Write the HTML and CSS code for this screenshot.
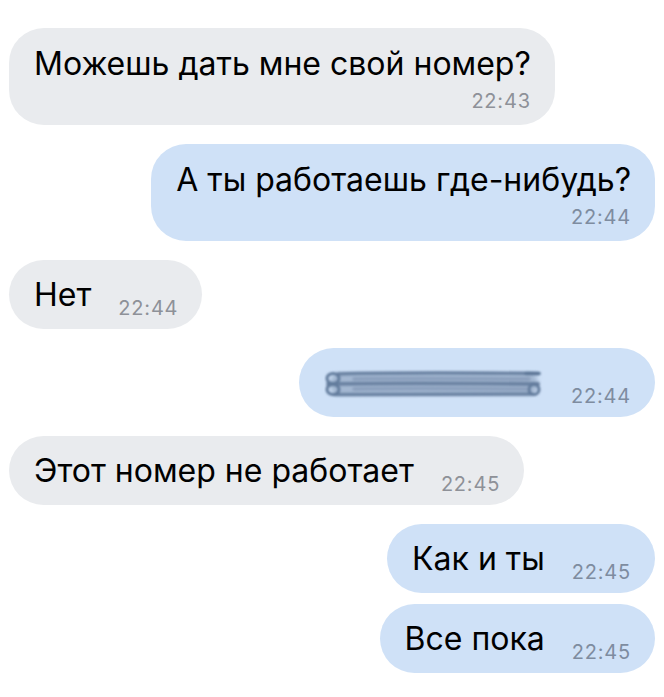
FILE: index.html
```html
<!DOCTYPE html>
<html lang="ru">
<head>
<meta charset="utf-8">
<link rel="stylesheet" href="styles.css">
</head>
<body>
<div class="chat">
  <div class="row in">
    <div class="bubble gray multi">
      <div class="text">Можешь дать мне свой номер?</div>
      <div class="time">22:43</div>
    </div>
  </div>
  <div class="row out">
    <div class="bubble blue multi">
      <div class="text">А ты работаешь где-нибудь?</div>
      <div class="time">22:44</div>
    </div>
  </div>
  <div class="row in">
    <div class="bubble gray single">
      <div class="text">Нет</div>
      <div class="time">22:44</div>
    </div>
  </div>
  <div class="row out">
    <div class="bubble blue single">
      <div class="text scribble-wrap">
        <svg class="scribble" width="220" height="30" viewBox="0 0 220 30">
          <defs>
            <filter id="blur" x="-10%" y="-50%" width="120%" height="200%">
              <feGaussianBlur stdDeviation="1.3"/>
            </filter>
            <filter id="blur2" x="-10%" y="-50%" width="120%" height="200%">
              <feGaussianBlur stdDeviation="2"/>
            </filter>
          </defs>
          <rect x="6" y="4" width="208" height="22" rx="9" fill="#a3b7d1" filter="url(#blur2)"/>
          <g filter="url(#blur)" fill="none" stroke-linecap="round">
            <path d="M14 5 C70 3.5 150 4 214 4.5" stroke="#6a82a2" stroke-width="3.4"/>
            <path d="M4 15 C70 14 150 14.5 214 15" stroke="#6a82a2" stroke-width="3.8"/>
            <path d="M10 25.5 C70 25 150 25.5 208 25" stroke="#6a82a2" stroke-width="3.6"/>
            <path d="M30 10 C100 9 160 10 205 10" stroke="#8a9fbc" stroke-width="3.5"/>
            <path d="M30 20 C100 19 160 20 205 20" stroke="#8a9fbc" stroke-width="3.5"/>
            <ellipse cx="9" cy="9.5" rx="6" ry="5" stroke="#627b9c" stroke-width="3"/>
            <ellipse cx="9" cy="20.5" rx="6" ry="5" stroke="#627b9c" stroke-width="3"/>
            <ellipse cx="210" cy="20.5" rx="5" ry="5" stroke="#627b9c" stroke-width="3"/>
            <path d="M202 4.5 L215 4.5" stroke="#5a7394" stroke-width="3.6"/>
          </g>
        </svg>
      </div>
      <div class="time">22:44</div>
    </div>
  </div>
  <div class="row in">
    <div class="bubble gray single">
      <div class="text">Этот номер не работает</div>
      <div class="time">22:45</div>
    </div>
  </div>
  <div class="row out">
    <div class="bubble blue single">
      <div class="text">Как и ты</div>
      <div class="time">22:45</div>
    </div>
  </div>
  <div class="row out tight">
    <div class="bubble blue single">
      <div class="text">Все пока</div>
      <div class="time">22:45</div>
    </div>
  </div>
</div>
</body>
</html>
```

FILE: styles.css
```css
html, body {
  margin: 0;
  padding: 0;
  background: #ffffff;
}
body {
  width: 664px;
  height: 697px;
  overflow: hidden;
  font-family: "Inter", "Roboto", "Noto Sans", sans-serif;
}
.chat {
  display: flex;
  flex-direction: column;
  padding: 28px 9px 0 9px;
  gap: 19px;
}
.row {
  display: flex;
}
.row.in { justify-content: flex-start; }
.row.out { justify-content: flex-end; }
.row.tight { margin-top: -8px; }
.bubble {
  border-radius: 35px;
  box-sizing: border-box;
}
.gray { background: #e9ebee; }
.blue { background: #cfe1f7; }
.text {
  font-size: 32px;
  line-height: 36px;
  color: #000;
  white-space: nowrap;
}
.time {
  font-size: 20px;
  line-height: 20px;
  letter-spacing: 0.8px;
  color: #8e9198;
  white-space: nowrap;
}
.blue .time { color: #7e8ca0; }
.multi {
  display: flex;
  flex-direction: column;
  padding: 18px 24px 14px 25px;
}
.multi .time {
  align-self: flex-end;
  margin-top: 9px;
}
.single {
  display: flex;
  align-items: flex-start;
  padding: 17px 24px 7px 25px;
}
.single .text {
  margin-bottom: 9px;
}
.single .time {
  align-self: flex-end;
  margin-left: 27px;
  margin-bottom: 4px;
}
.scribble-wrap {
  display: flex;
  align-items: center;
  height: 36px;
}
.scribble {
  display: block;
  margin-top: 2px;
}
```
